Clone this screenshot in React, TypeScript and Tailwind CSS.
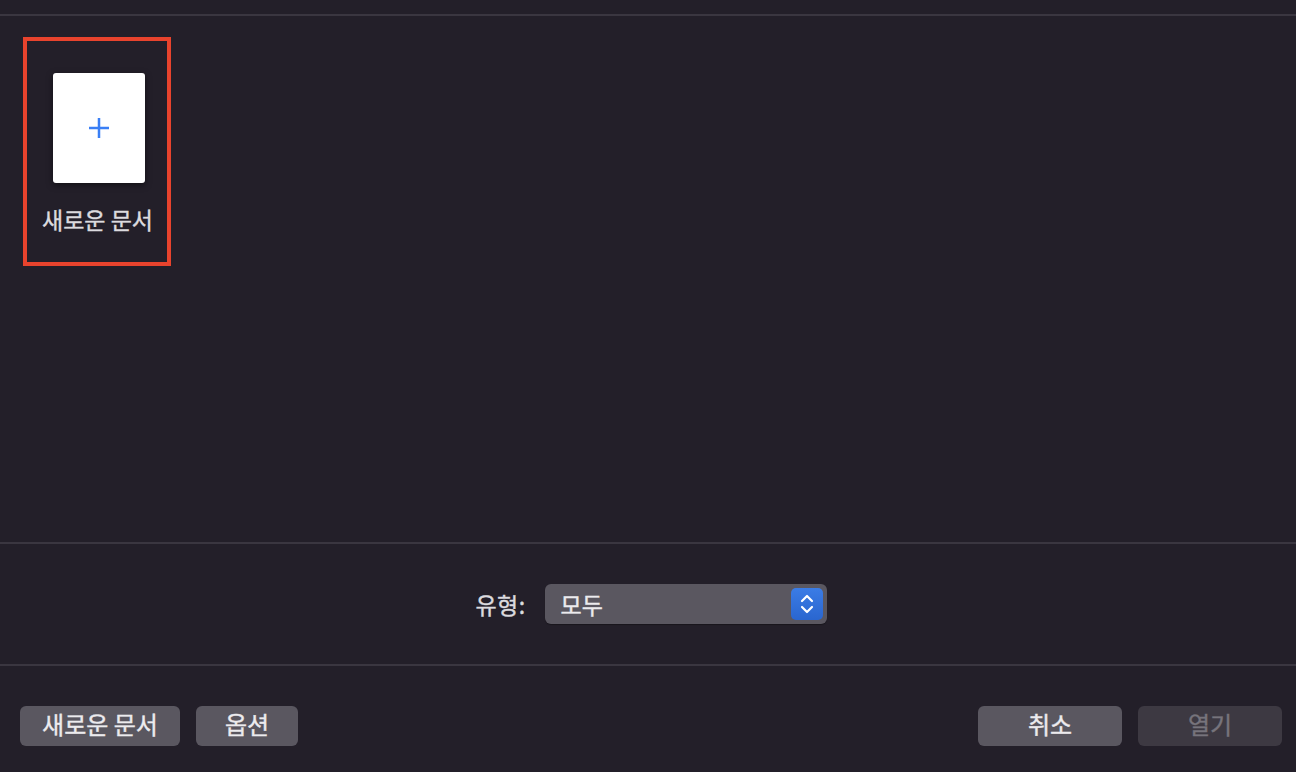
import React from "react";

const font = { fontFamily: '"Noto Sans CJK KR", "Noto Sans", sans-serif' };

export default function App() {
  return (
    <div className="w-[1296px] h-[772px] bg-[#231f29] flex flex-col overflow-hidden select-none" style={font}>
      <div className="h-[14px] shrink-0" />
      <div className="h-[2px] bg-[#3a3640] shrink-0" />
      <div className="h-[526px] shrink-0 pl-[23px] pt-[21px]">
        <div className="w-[148px] h-[229px] border-[4px] border-[#e8432d] flex flex-col items-center">
          <div className="mt-[32px] ml-[4px] w-[92px] h-[110px] bg-white rounded-[3px] shadow-[0_2px_6px_rgba(0,0,0,0.5)] flex items-center justify-center">
            <svg width="22" height="22" viewBox="0 0 22 22">
              <path d="M11 1V21M1 11H21" stroke="#3a7ff5" strokeWidth="2.5" />
            </svg>
          </div>
          <div className="mt-[22px] ml-[1px] text-[23px] leading-[28px] text-[#dcdbdf] font-normal [-webkit-text-stroke-width:0.4px]">새로운 문서</div>
        </div>
      </div>
      <div className="h-[2px] bg-[#3a3640] shrink-0" />
      <div className="h-[120px] shrink-0 flex items-center justify-center pl-[6px]">
        <span className="text-[23px] text-[#dcdbdf] font-normal mr-[19px] [-webkit-text-stroke-width:0.4px] tracking-[0.5px]">유형:</span>
        <div className="w-[282px] h-[40px] rounded-[6px] bg-[#5a5760] shadow-[0_1px_1px_rgba(0,0,0,0.3)] flex items-center justify-between pl-[16px] pr-[4px]">
          <span className="text-[23px] text-[#ecebee] font-normal [-webkit-text-stroke-width:0.4px]">모두</span>
          <div className="w-[32px] h-[32px] rounded-[5px] bg-gradient-to-b from-[#3b7ce6] to-[#2a66cf] flex items-center justify-center">
            <svg width="18" height="26" viewBox="0 0 18 26">
              <path d="M4 10L9 5L14 10M4 16L9 21L14 16" stroke="white" strokeWidth="2.2" fill="none" strokeLinecap="round" strokeLinejoin="round" />
            </svg>
          </div>
        </div>
      </div>
      <div className="h-[2px] bg-[#3a3640] shrink-0" />
      <div className="flex-1 flex items-start justify-between pt-[40px] pl-[20px] pr-[14px]">
        <div className="flex gap-[16px]">
          <button className="w-[160px] h-[40px] rounded-[6px] bg-[#5a5760] text-[24px] leading-[40px] pb-[4px] font-normal text-[#ecebee] flex items-center justify-center [-webkit-text-stroke-width:0.4px]">새로운 문서</button>
          <button className="w-[102px] h-[40px] rounded-[6px] bg-[#5a5760] text-[24px] leading-[40px] pb-[4px] font-normal text-[#ecebee] flex items-center justify-center [-webkit-text-stroke-width:0.4px]">옵션</button>
        </div>
        <div className="flex gap-[16px]">
          <button className="w-[144px] h-[40px] rounded-[6px] bg-[#5a5760] text-[24px] leading-[40px] pb-[4px] font-normal text-[#ecebee] flex items-center justify-center [-webkit-text-stroke-width:0.4px]">취소</button>
          <button className="w-[144px] h-[40px] rounded-[6px] bg-[#3d3942] text-[24px] leading-[40px] pb-[4px] font-normal text-[#77747c] flex items-center justify-center [-webkit-text-stroke-width:0.4px]">열기</button>
        </div>
      </div>
    </div>
  );
}
